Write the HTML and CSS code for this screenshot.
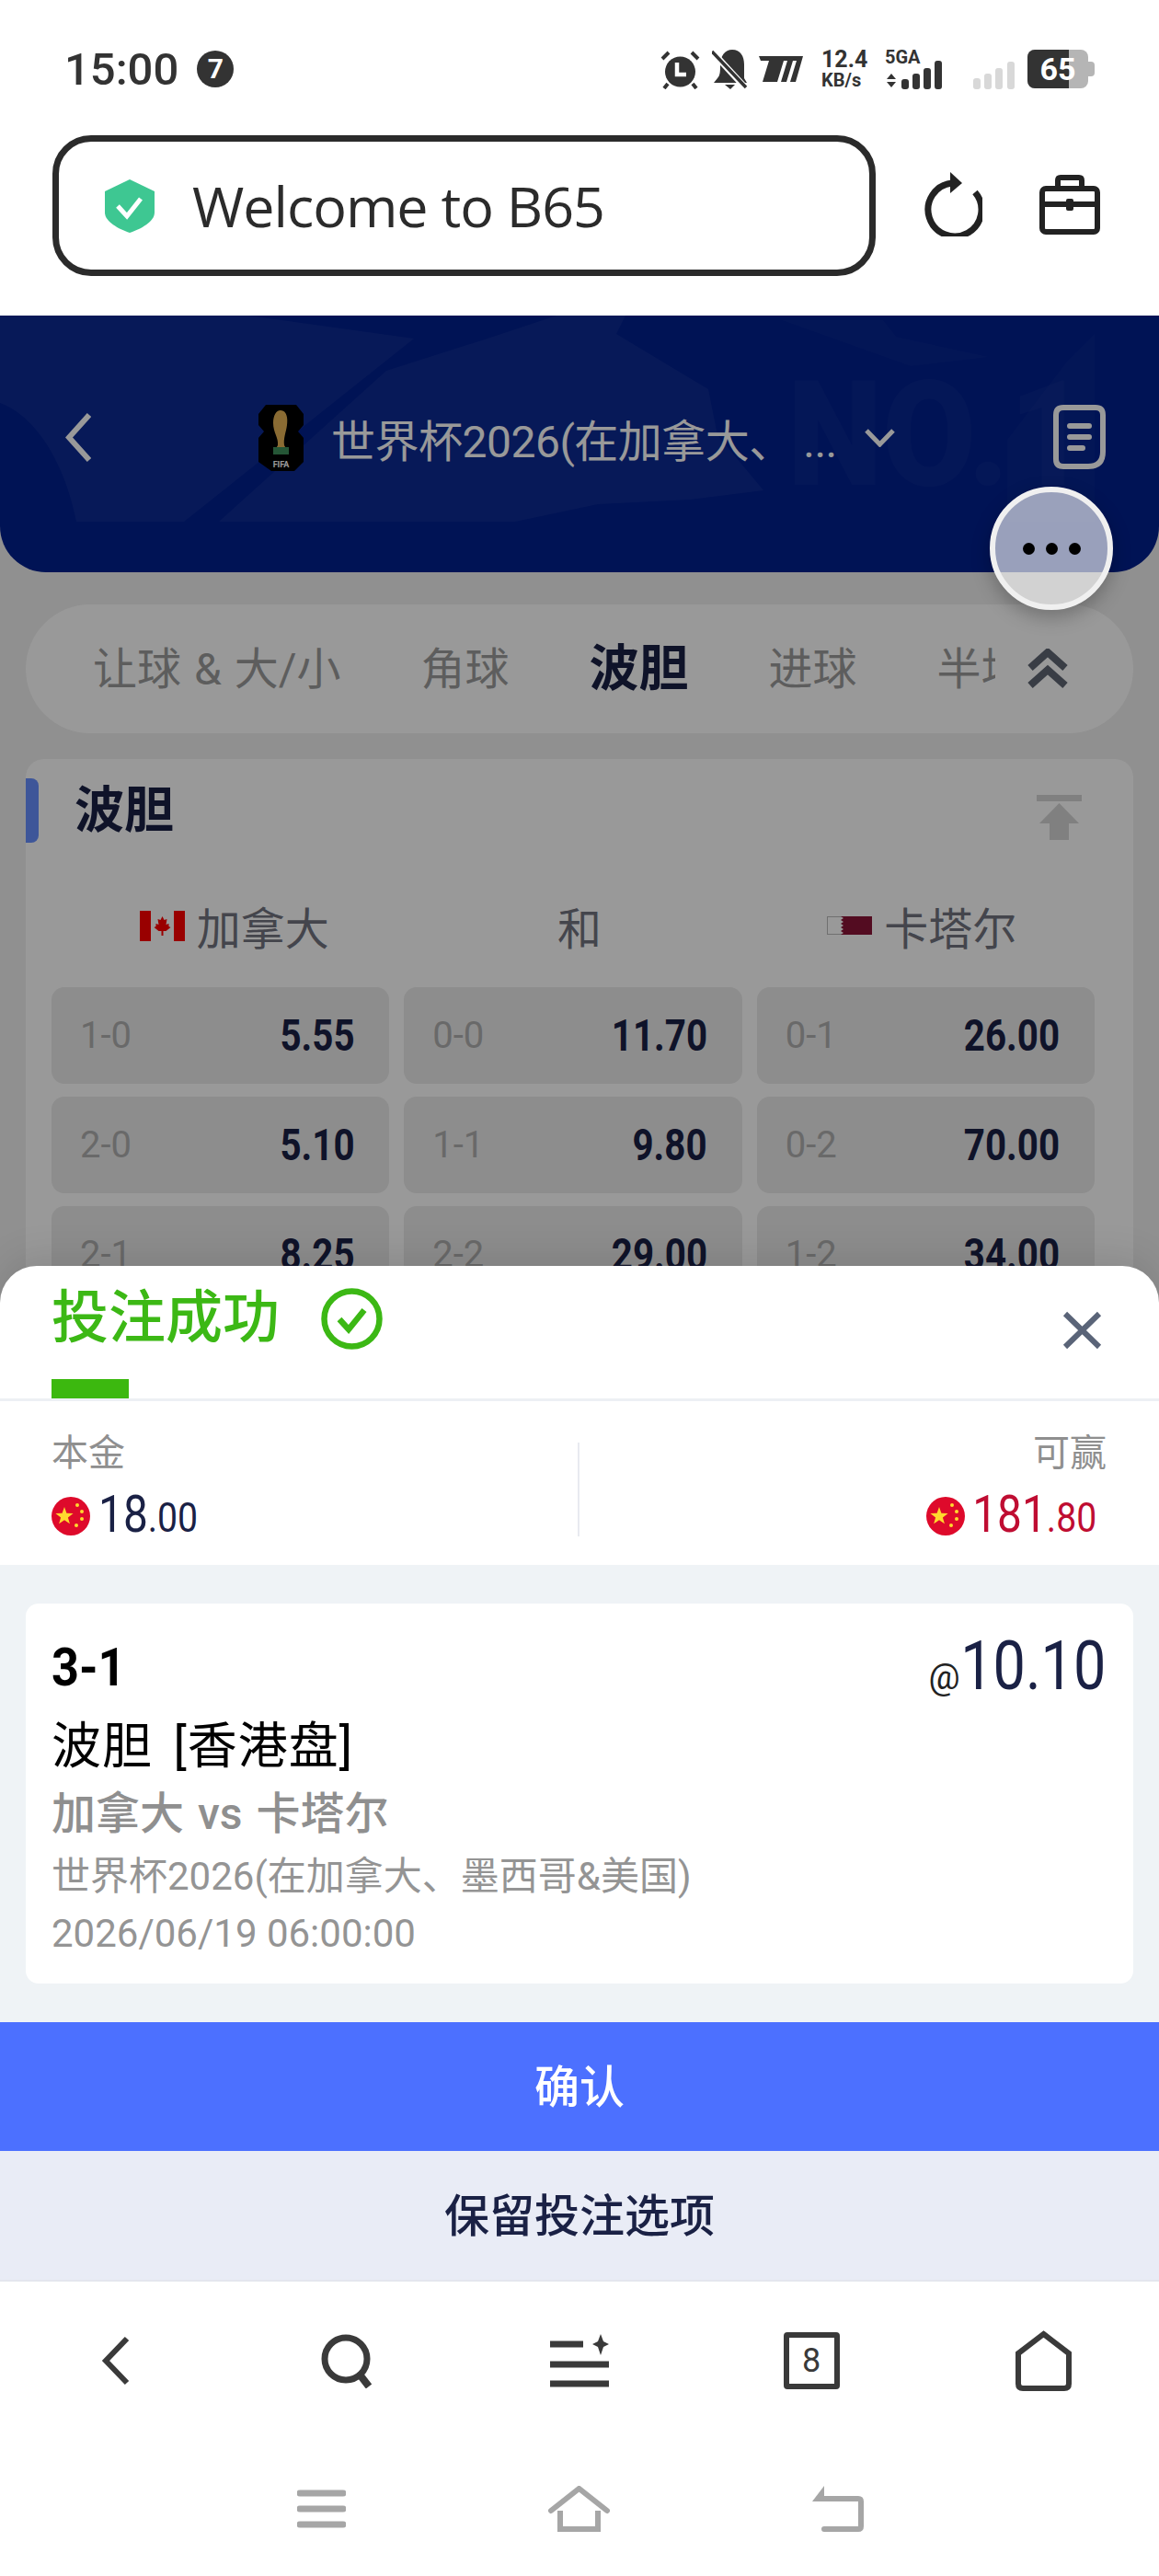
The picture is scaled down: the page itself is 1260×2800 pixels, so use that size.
FILE: index.html
```html
<!DOCTYPE html>
<html lang="zh-CN">
<head>
    <meta charset="UTF-8">
    <meta name="viewport" content="width=device-width, initial-scale=1.0">
    <title>B65</title>
    <link rel="stylesheet" href="styles.css">
</head>
<body>

<!-- barra de estado -->
<div class="statusbar">
    <div class="status-left">
        <span class="clock">15:00</span>
        <span class="clock-badge">7</span>
    </div>
    <div class="status-right">
        <svg class="st-alarm" width="43" height="43" viewBox="0 0 43 43"><circle cx="21.5" cy="24" r="16.500" fill="#333"/><path d="M18 14v13h10" fill="none" stroke="#fff" stroke-width="4.500"/><path d="M2 10l7-7M41 10l-7-7M8 37l-4 5M35 37l4 5" stroke="#333" stroke-width="4" fill="none"/></svg>
        <svg class="st-bell" width="39" height="43" viewBox="0 0 39 43"><path d="M6 31c3-3 3-8 3-14C9 7 14 0 22 0c9 0 13 7 13 16v15l3 5H2z" fill="#333"/><path d="M14 38h11l-5 5z" fill="#333"/><path d="M1 3l35 38" stroke="#fff" stroke-width="7"/><path d="M0 2l37 39" stroke="#333" stroke-width="3.500"/></svg>
        <svg class="st-m" width="48" height="28" viewBox="0 0 48 28"><path d="M0 0h48l-8 28h-6l7-23h-4l-7 23h-6l7-23h-4l-7 23H4L11 5H2z" fill="#333"/></svg>
        <div class="st-speed"><span>12.4</span><small>KB/s</small></div>
        <div class="st-net">
            <span class="st-5g">5GA</span>
            <svg width="65" height="44" viewBox="0 0 65 44"><path d="M2 33l5-6 5 6zM2 36h10l-5 6z" fill="#333"/><rect x="18" y="33" width="8" height="11" rx="3" fill="#333"/><rect x="30" y="27" width="8" height="17" rx="3" fill="#333"/><rect x="42" y="21" width="8" height="23" rx="3" fill="#333"/><rect x="54" y="13" width="8" height="31" rx="3" fill="#333"/></svg>
        </div>
        <svg class="st-gray" width="45" height="30" viewBox="0 0 45 30"><rect x="0" y="18" width="8" height="12" rx="3" fill="#d8d8d8"/><rect x="12" y="13" width="8" height="17" rx="3" fill="#d8d8d8"/><rect x="24" y="7" width="8" height="23" rx="3" fill="#d8d8d8"/><rect x="37" y="0" width="8" height="30" rx="3" fill="#d8d8d8"/></svg>
        <div class="st-battery"><div class="st-body"><span class="st-charge"></span><span class="st-level">65</span></div></div>
    </div>
</div>

<!-- barra de direcciones -->
<div class="urlrow">
    <div class="urlbox">
        <svg width="54" height="58" viewBox="0 0 54 58"><path d="M27 0l27 13v23c0 10-15 18-27 22C15 54 0 46 0 36V13z" fill="#3ec792"/><path d="M14 29l10 11 15-19" fill="none" stroke="#fff" stroke-width="5"/></svg>
        <span class="urltext">Welcome to B65</span>
    </div>
    <svg class="url-reload" width="66" height="70" viewBox="0 0 66 70"><path d="M58 22A29 29 0 1 1 33 12" fill="none" stroke="#222" stroke-width="7"/><path d="M31 0l13 12-13 11z" fill="#222"/></svg>
    <svg class="url-tool" width="66" height="65" viewBox="0 0 66 65"><rect x="3" y="15" width="60" height="47" rx="4" fill="none" stroke="#222" stroke-width="6"/><path d="M20 15V6q0-3 3-3h20q3 0 3 3v9M3 32h60" fill="none" stroke="#222" stroke-width="6"/><rect x="29" y="26" width="8" height="13" rx="2" fill="#222"/></svg>
</div>

<div class="main">
    <!-- cabecera -->
    <div class="header">
        <svg class="header-bg" width="1260" height="224" viewBox="0 0 1260 224"><path d="M0 0H270L450 25 200 224H83C70 160 40 110 0 95zM238 224L420 60 530 25 605 0H680L670 20 770 80 780 130 830 190 750 200 650 205 560 224z" fill="#fff" opacity=".05"/><path d="M850 5H960L1000 55 960 20 1075 45 990 55zM1095 135L1160 50 1190 20V224H1095z" fill="#fff" opacity=".025"/></svg>
        <span class="header-mark">NO.1</span>
        <svg class="header-back" width="29" height="55" viewBox="0 0 29 55"><path d="M26 3L4 27.500 26 52" fill="none" stroke="#fff" stroke-width="6"/></svg>
        <div class="header-title">
            <svg width="49" height="72" viewBox="0 0 49 72"><path d="M8 0h33l8 10v12l-6 7 6 7v26l-10 10H14L0 62V36l6-7-6-7V10z" fill="#000"/><path d="M24 6c7 0 8 9 7 16-1 8-4 14-3 22l4 7H17l4-7c1-8-5-14-5-24 0-8 3-14 8-14z" fill="#e6b355"/><rect x="16" y="46" width="17" height="8" fill="#3f8f5a"/><text x="24.500" y="68" text-anchor="middle" class="fifa">FIFA</text></svg>
            <span class="header-name">世界杯2026(在加拿大、 ...</span>
            <svg width="35" height="20" viewBox="0 0 35 20"><path d="M3 2l14.500 15L32 2" fill="none" stroke="#fff" stroke-width="5"/></svg>
        </div>
        <svg class="header-doc" width="57" height="70" viewBox="0 0 57 70"><path d="M11 3h35q8 0 8 8v40q0 16-16 16H11q-8 0-8-8V11q0-8 8-8z" fill="none" stroke="#fff" stroke-width="6"/><path d="M18 23h21M18 35h21M18 47h14" stroke="#fff" stroke-width="6" stroke-linecap="round"/></svg>
    </div>

    <!-- pestañas -->
    <div class="tabs">
        <div class="tabs-scroll">
            <span class="tab tab-first">让球 &amp; 大/小</span>
            <span class="tab">角球</span>
            <span class="tab tab-on">波胆</span>
            <span class="tab">进球</span>
            <span class="tab">半场</span>
        </div>
        <svg width="48" height="44" viewBox="0 0 48 44"><path d="M5 21L24 4l19 17M5 40l19-17 19 17" fill="none" stroke="#5f6673" stroke-width="8"/></svg>
    </div>

    <!-- tabla de cuotas -->
    <div class="market">
        <div class="market-head">
            <span class="market-title">波胆</span>
            <svg width="49" height="49" viewBox="0 0 49 49"><path d="M0 0h49v7H0zM24.500 9L46 31H35v18H14V31H3z" fill="#d6d6d6"/></svg>
        </div>
        <div class="teams">
            <div class="team team-home">
                <svg width="49" height="33" viewBox="0 0 49 33"><rect width="49" height="33" fill="#fff"/><rect width="12" height="33" fill="#f00"/><rect x="37" width="12" height="33" fill="#f00"/><path d="M24.500 6l2 4 3-1-1 6 3-1v3l2 1-5 4h-3v5h-2v-5h-3l-5-4 2-1v-3l3 1-1-6 3 1z" fill="#f00"/></svg>
                <span>加拿大</span>
            </div>
            <div class="team team-draw">和</div>
            <div class="team team-away">
                <svg width="49" height="20" viewBox="0 0 49 20"><rect x=".5" y=".5" width="48" height="19" fill="#fff" stroke="#bbb"/><path d="M15 0h34v20H15l3-2-3-2 3-2-3-2 3-2-3-2 3-2-3-2 3-2z" fill="#8a1538"/></svg>
                <span>卡塔尔</span>
            </div>
        </div>
        <div class="odds">
            <div class="odd"><span>1-0</span><b class="narrow">5.55</b></div>
            <div class="odd"><span>0-0</span><b class="narrow">11.70</b></div>
            <div class="odd"><span>0-1</span><b class="narrow">26.00</b></div>
            <div class="odd"><span>2-0</span><b class="narrow">5.10</b></div>
            <div class="odd"><span>1-1</span><b class="narrow">9.80</b></div>
            <div class="odd"><span>0-2</span><b class="narrow">70.00</b></div>
            <div class="odd"><span>2-1</span><b class="narrow">8.25</b></div>
            <div class="odd"><span>2-2</span><b class="narrow">29.00</b></div>
            <div class="odd"><span>1-2</span><b class="narrow">34.00</b></div>
        </div>
    </div>

    <div class="dim"></div>

    <div class="fab"><i></i><i></i><i></i></div>

    <!-- hoja de confirmación -->
    <div class="sheet">
        <div class="sheet-head">
            <span class="sheet-title">投注成功</span>
            <svg class="sheet-check" width="67" height="67" viewBox="0 0 67 67"><circle cx="33.500" cy="33.500" r="30" fill="none" stroke="#3cb815" stroke-width="6.500"/><path d="M20 34l10 11 17-21" fill="none" stroke="#3cb815" stroke-width="6.500"/></svg>
            <svg class="sheet-close" width="43" height="42" viewBox="0 0 43 42"><path d="M3 3l37 36M40 3L3 39" stroke="#5a6478" stroke-width="6"/></svg>
            <span class="sheet-mark"></span>
        </div>
        <div class="sums">
            <div class="sum">
                <span class="sum-label">本金</span>
                <div class="sum-value">
                    <svg width="42" height="42" viewBox="0 0 42 42"><circle cx="21" cy="21" r="21" fill="#de0a2b"/><path d="M14 11l2.400 6.800 7.200.2-5.700 4.400 2 6.900-5.900-4.100-5.900 4.100 2-6.900L4.400 18l7.200-.2z" fill="#ffd92e"/><circle cx="28" cy="9" r="2" fill="#ffd92e"/><circle cx="33" cy="16" r="2" fill="#ffd92e"/><circle cx="33" cy="24" r="2" fill="#ffd92e"/><circle cx="27" cy="31" r="2" fill="#ffd92e"/></svg>
                    <span class="amount">18<small>.00</small></span>
                </div>
            </div>
            <div class="sum sum-right">
                <span class="sum-label">可赢</span>
                <div class="sum-value">
                    <svg width="42" height="42" viewBox="0 0 42 42"><circle cx="21" cy="21" r="21" fill="#de0a2b"/><path d="M14 11l2.400 6.800 7.200.2-5.700 4.400 2 6.900-5.900-4.100-5.900 4.100 2-6.900L4.400 18l7.200-.2z" fill="#ffd92e"/><circle cx="28" cy="9" r="2" fill="#ffd92e"/><circle cx="33" cy="16" r="2" fill="#ffd92e"/><circle cx="33" cy="24" r="2" fill="#ffd92e"/><circle cx="27" cy="31" r="2" fill="#ffd92e"/></svg>
                    <span class="amount amount-win">181<small>.80</small></span>
                </div>
            </div>
        </div>
        <div class="ticket-wrap">
            <div class="ticket">
                <div class="ticket-top">
                    <span class="ticket-score">3-1</span>
                    <span class="ticket-odds"><small>@</small><span class="narrow">10.10</span></span>
                </div>
                <div class="ticket-market">波胆 [香港盘]</div>
                <div class="ticket-match">加拿大 vs 卡塔尔</div>
                <div class="ticket-league">世界杯2026(在加拿大、墨西哥&amp;美国)</div>
                <div class="ticket-date">2026/06/19 06:00:00</div>
            </div>
        </div>
        <button class="btn btn-main">确认</button>
        <button class="btn btn-alt">保留投注选项</button>
    </div>
</div>

<!-- navegador -->
<div class="browser-nav">
    <svg width="32" height="54" viewBox="0 0 32 54"><path d="M28 3L5 27l23 24" fill="none" stroke="#3a3a3a" stroke-width="6"/></svg>
    <svg width="58" height="59" viewBox="0 0 58 59"><circle cx="27" cy="27" r="23" fill="none" stroke="#3a3a3a" stroke-width="7"/><path d="M42 44l10 13" stroke="#3a3a3a" stroke-width="8"/></svg>
    <svg width="64" height="59" viewBox="0 0 64 59"><path d="M0 11h36M0 33h64M0 54h64" stroke="#3a3a3a" stroke-width="7"/><path d="M55 0l3 8 6 3-6 3-3 9-3-9-6-3 6-3z" fill="#3a3a3a"/></svg>
    <div class="nav-count">8</div>
    <svg width="61" height="66" viewBox="0 0 61 66"><path d="M30.500 4L58 25v33q0 5-5 5H8q-5 0-5-5V25z" fill="none" stroke="#3a3a3a" stroke-width="6"/></svg>
</div>

<!-- navegación del sistema -->
<div class="system-nav">
    <svg width="53" height="42" viewBox="0 0 53 42"><path d="M3 4h47M3 21h47M3 38h47" stroke="#a6a6a6" stroke-width="7" stroke-linecap="round"/></svg>
    <svg width="67" height="50" viewBox="0 0 67 50"><path d="M3 27L33.500 3 64 27" fill="none" stroke="#a6a6a6" stroke-width="6" stroke-linecap="round"/><path d="M13 27v20h41V27" fill="none" stroke="#a6a6a6" stroke-width="6"/></svg>
    <svg width="56" height="50" viewBox="0 0 56 50"><path d="M8 14h42q3 0 3 3v27q0 3-3 3H13" fill="none" stroke="#a6a6a6" stroke-width="6" stroke-linecap="round"/><path d="M13 0v17H0z" fill="#a6a6a6"/></svg>
</div>

</body>
</html>
```

FILE: styles.css
```css
/* General */
* {
    box-sizing: border-box;
}
body {
    margin: 0;
    width: 1260px;
    background-color: #fff;
    font-family: Roboto, "Noto Sans CJK SC", sans-serif;
    color: #1a2145;
}
/* cifras estrechas: no hay fuente condensada instalada */
.narrow {
    display: inline-block;
    transform: scaleX(0.84);
    transform-origin: right center;
}

/* Barra de estado */
.statusbar {
    height: 147px;
    padding: 3px 70px 0;
    display: flex;
    justify-content: space-between;
    align-items: center;
    color: #333;
}
.status-left {
    display: flex;
    align-items: center;
    gap: 20px;
}
.clock {
    font-size: 49px;
    font-weight: 500;
    line-height: 1;
}
.clock-badge {
    width: 40px;
    height: 40px;
    border-radius: 50%;
    background-color: #333;
    color: #fff;
    font-size: 30px;
    font-weight: 700;
    line-height: 40px;
    text-align: center;
}
.status-right {
    display: flex;
    align-items: center;
}
.st-bell {
    margin-left: 13px;
}
.st-m {
    margin-left: 12px;
}
.st-speed {
    margin-left: 20px;
    width: 50px;
    display: flex;
    flex-direction: column;
    font-weight: 700;
    font-size: 25px;
    line-height: 24px;
    white-space: nowrap;
}
.st-speed small {
    font-size: 20px;
    line-height: 20px;
}
.st-net {
    margin-left: 19px;
    width: 65px;
    height: 44px;
    position: relative;
}
.st-5g {
    position: absolute;
    left: 0;
    top: -2px;
    font-size: 20px;
    line-height: 22px;
    font-weight: 700;
}
.st-gray {
    margin-left: 31px;
    align-self: flex-end;
}
.st-battery {
    margin-left: 14px;
    width: 73px;
    position: relative;
}
.st-battery::after {
    content: "";
    position: absolute;
    right: 0;
    top: 13px;
    width: 7px;
    height: 16px;
    border-radius: 0 4px 4px 0;
    background-color: #b5b5b5;
}
.st-body {
    width: 66px;
    height: 42px;
    border-radius: 8px;
    background-color: #b5b5b5;
    position: relative;
    overflow: hidden;
}
.st-charge {
    position: absolute;
    left: 0;
    top: 0;
    bottom: 0;
    width: 45px;
    background-color: #333;
}
.st-level {
    position: absolute;
    left: 0;
    right: 0;
    top: 0;
    text-align: center;
    color: #fff;
    font-size: 34px;
    line-height: 42px;
    font-weight: 700;
}

/* Barra de direcciones */
.urlrow {
    height: 196px;
    padding-left: 57px;
    display: flex;
    align-items: flex-start;
}
.urlbox {
    width: 895px;
    height: 153px;
    border: 7px solid #2b2b2b;
    border-radius: 42px;
    padding-left: 50px;
    display: flex;
    align-items: center;
    gap: 41px;
}
.urltext {
    font-family: "Open Sans", sans-serif;
    font-size: 61px;
    letter-spacing: -1px;
    color: #2b2b2b;
    white-space: nowrap;
}
.url-reload {
    margin-left: 50px;
    margin-top: 40px;
}
.url-tool {
    margin-left: 62px;
    margin-top: 43px;
}

/* Contenedor principal */
.main {
    height: 2135px;
    position: relative;
    overflow: hidden;
    background-color: #f0f0f0;
}
.dim {
    position: absolute;
    inset: 0;
    background-color: rgba(0, 0, 0, 0.4);
}

/* Cabecera */
.header {
    height: 279px;
    padding: 97px 58px 0 71px;
    border-radius: 0 0 50px 50px;
    background-color: #00208e;
    color: #fff;
    position: relative;
    overflow: hidden;
    display: flex;
    justify-content: space-between;
    align-items: flex-start;
}
.header-bg {
    position: absolute;
    left: 0;
    top: 0;
}
.header-mark {
    position: absolute;
    left: 856px;
    top: 50px;
    font-size: 160px;
    line-height: 1;
    font-weight: 900;
    color: rgba(255, 255, 255, 0.03);
    transform: scaleX(0.92);
    transform-origin: left top;
}
.header-back,
.header-doc {
    position: relative;
}
.header-back {
    margin-top: 8px;
}
.header-title {
    position: relative;
    margin-left: 10px;
    display: flex;
    align-items: center;
    height: 72px;
}
.header-title svg:last-child {
    margin-left: 25px;
}
.header-name {
    margin-left: 30px;
    font-size: 48px;
    white-space: nowrap;
    width: 554px;
    letter-spacing: -0.5px;
}
.fifa {
    font-family: Roboto, sans-serif;
    font-size: 9px;
    font-weight: 700;
    fill: #fff;
}

/* Pestañas */
.tabs {
    margin: 35px 28px 0;
    height: 140px;
    border-radius: 70px;
    background-color: #fff;
    padding: 0 69px 0 73px;
    display: flex;
    align-items: center;
}
.tabs-scroll {
    width: 981px;
    margin-right: 33px;
    padding-bottom: 9px;
    overflow: hidden;
    display: flex;
    gap: 87px;
    align-items: center;
    flex: none;
}
.tab {
    flex: none;
    font-size: 48px;
    color: #9c9c9c;
    white-space: nowrap;
}
.tab-first {
    word-spacing: 2px;
}
.tab-on {
    font-size: 54px;
    font-weight: 700;
    color: #1a2145;
}

/* Tabla de cuotas */
.market {
    margin: 28px 28px 0;
    padding: 0 42px 0 28px;
    border-radius: 20px;
    background-color: #fff;
    height: 900px;
    position: relative;
}
.market::before {
    content: "";
    position: absolute;
    left: 0;
    top: 21px;
    width: 14px;
    height: 70px;
    border-radius: 0 8px 8px 0;
    background-color: #6890ff;
}
.market-head {
    height: 112px;
    padding: 26px 14px 0 25px;
    display: flex;
    justify-content: space-between;
    align-items: flex-start;
}
.market-title {
    font-size: 54px;
    font-weight: 700;
    line-height: 62px;
}
.market-head svg {
    margin-top: 13px;
}
.teams {
    display: grid;
    grid-template-columns: repeat(3, 1fr);
    column-gap: 16px;
    height: 136px;
    padding-top: 39px;
}
.team {
    display: flex;
    justify-content: center;
    align-items: center;
    height: 60px;
    gap: 13px;
    font-size: 48px;
    color: #72747f;
}
.team-home {
    padding-left: 30px;
}
.team-draw {
    padding-left: 14px;
}
.team-away {
    padding-right: 8px;
}
.odds {
    display: grid;
    grid-template-columns: repeat(3, 1fr);
    gap: 14px 16px;
}
.odd {
    height: 105px;
    padding: 0 38px 0 31px;
    border-radius: 14px;
    background-color: #ebebeb;
    display: flex;
    justify-content: space-between;
    align-items: center;
}
.odd span {
    font-size: 40px;
    color: #b0b0b0;
}
.odd b {
    font-size: 48px;
    font-weight: 700;
}

/* Botón flotante */
.fab {
    position: absolute;
    left: 1076px;
    top: 186px;
    width: 134px;
    height: 134px;
    border-radius: 50%;
    border: 6px solid #f0f0f0;
    background-color: rgba(255, 255, 255, 0.6);
    box-shadow: 0 8px 20px rgba(0, 0, 0, 0.25);
    display: flex;
    justify-content: center;
    align-items: center;
    gap: 12px;
}
.fab i {
    width: 13px;
    height: 13px;
    border-radius: 50%;
    background-color: #000;
}

/* Hoja */
.sheet {
    position: absolute;
    left: 0;
    right: 0;
    bottom: 0;
    border-radius: 40px 40px 0 0;
    background-color: #fff;
    box-shadow: 0 -10px 40px rgba(0, 0, 0, 0.1);
    overflow: hidden;
}
.sheet-head {
    height: 147px;
    padding-left: 56px;
    border-bottom: 3px solid #edf0f4;
    position: relative;
    display: flex;
    align-items: flex-start;
}
.sheet-title {
    margin-top: 19px;
    font-size: 62px;
    font-weight: 500;
    line-height: 76px;
    color: #3cb815;
}
.sheet-check {
    margin-left: 45px;
    margin-top: 24px;
}
.sheet-close {
    position: absolute;
    left: 1155px;
    top: 49px;
}
.sheet-mark {
    position: absolute;
    left: 56px;
    bottom: 0;
    width: 84px;
    height: 21px;
    background-color: #3cb80f;
}
.sums {
    height: 178px;
    padding: 32px 57px 0 56px;
    display: grid;
    grid-template-columns: 1fr 1fr;
    position: relative;
}
.sums::after {
    content: "";
    position: absolute;
    left: 628px;
    top: 45px;
    width: 2px;
    height: 102px;
    background-color: #e8eaf0;
}
.sum-label {
    display: block;
    font-size: 40px;
    line-height: 50px;
    color: #8f8f8f;
}
.sum-value {
    margin-top: 16px;
    display: flex;
    align-items: center;
    gap: 9px;
}
.sum-right {
    text-align: right;
}
.sum-right .sum-value {
    justify-content: flex-end;
    padding-right: 11px;
}
.amount {
    display: inline-block;
    font-size: 55px;
    line-height: 50px;
    color: #1a2145;
    transform: scaleX(0.87);
    transform-origin: left center;
}
.amount small {
    font-size: 45px;
}
.amount-win {
    color: #bf0d32;
    margin-left: -21px;
    transform-origin: right center;
}

/* Detalle de la apuesta */
.ticket-wrap {
    padding: 42px 28px 42px;
    background-color: #eff3f6;
}
.ticket {
    height: 413px;
    padding: 30px 30px 0 28px;
    border-radius: 14px;
    background-color: #fff;
}
.ticket-top {
    height: 78px;
    display: flex;
    justify-content: space-between;
    align-items: center;
}
.ticket-score {
    display: inline-block;
    font-size: 58px;
    font-weight: 700;
    color: #000;
    transform: scaleX(0.9);
    transform-origin: left center;
}
.ticket-odds {
    margin-top: 8px;
    font-size: 75px;
    line-height: 78px;
    color: #1a2145;
}
.ticket-odds small {
    font-size: 38px;
    color: #222;
    margin-right: -30px;
}
.ticket-market {
    font-size: 54px;
    line-height: 96px;
    letter-spacing: 1px;
    word-spacing: 8px;
    color: #000;
}
.ticket-match {
    font-size: 48px;
    line-height: 50px;
    font-weight: 500;
    word-spacing: 3px;
    color: #8f8f8f;
}
.ticket-league {
    font-size: 42px;
    line-height: 86px;
    color: #949494;
}
.ticket-date {
    font-size: 42px;
    line-height: 38px;
    color: #949494;
}

/* Botones */
.btn {
    display: block;
    width: 100%;
    border: none;
    font-family: Roboto, "Noto Sans CJK SC", sans-serif;
    font-size: 49px;
    font-weight: 500;
    padding-bottom: 8px;
}
.btn-main {
    height: 140px;
    background-color: #4c70ff;
    color: #fff;
}
.btn-alt {
    height: 140px;
    background-color: #e9ecf6;
    color: #1a2145;
}

/* Navegación inferior */
.browser-nav {
    height: 174px;
    border-top: 2px solid #e4e6ee;
    display: grid;
    grid-template-columns: repeat(5, 1fr);
    justify-items: center;
    align-items: center;
}
.nav-count {
    width: 61px;
    height: 62px;
    border: 6px solid #3a3a3a;
    border-radius: 4px;
    text-align: center;
    font-size: 36px;
    line-height: 50px;
    color: #3a3a3a;
}
.system-nav {
    height: 150px;
    padding: 0 209px;
    display: grid;
    grid-template-columns: repeat(3, 1fr);
    justify-items: center;
    align-items: center;
}
```
